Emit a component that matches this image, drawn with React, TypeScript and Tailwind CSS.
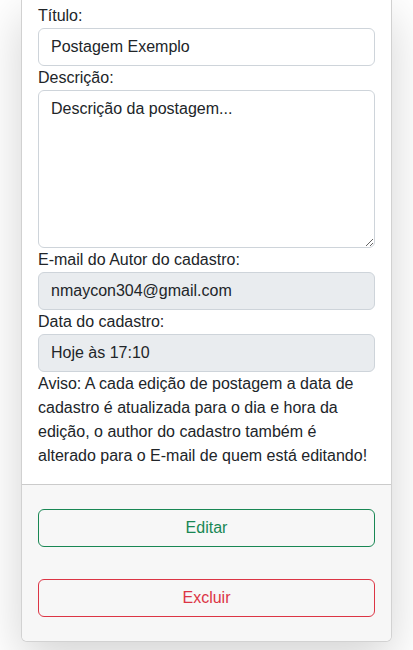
import { useState } from "react";

const inputBase =
  "block w-full rounded-[6px] border border-[#ced4da] px-3 py-[6px] text-base leading-6 text-[#212529] outline-none";

export default function App() {
  const [titulo, setTitulo] = useState("Postagem Exemplo");
  const [descricao, setDescricao] = useState("Descrição da postagem...");

  return (
    <div className="min-h-[650px] w-full bg-white font-['Liberation_Sans',Arial,sans-serif] text-base leading-6 text-[#212529]">
      <div className="ml-[21px] w-[371px] overflow-hidden rounded-b-[6px] border border-t-0 border-[rgba(0,0,0,0.175)] bg-white shadow-[0_1rem_3rem_rgba(0,0,0,0.175)]">
        <div className="px-4 pt-1 pb-4">
          <label className="block">Título:</label>
          <input
            className={inputBase + " bg-white"}
            value={titulo}
            onChange={(e) => setTitulo(e.target.value)}
          />
          <label className="block">Descrição:</label>
          <textarea
            className={inputBase + " h-[158px] bg-white"}
            value={descricao}
            onChange={(e) => setDescricao(e.target.value)}
          />
          <label className="block">E-mail do Autor do cadastro:</label>
          <input
            className={inputBase + " bg-[#e9ecef]"}
            value="nmaycon304@gmail.com"
            disabled
          />
          <label className="block">Data do cadastro:</label>
          <input className={inputBase + " bg-[#e9ecef]"} value="Hoje às 17:10" disabled />
          <p>
            Aviso: A cada edição de postagem a data de cadastro é atualizada para o dia e hora da
            edição, o author do cadastro também é alterado para o E-mail de quem está editando!
          </p>
        </div>
        <div className="flex flex-col gap-8 border-t border-[rgba(0,0,0,0.175)] bg-[#f7f7f7] px-4 py-6">
          <button className="block w-full rounded-[6px] border border-[#198754] px-3 py-[6px] text-base leading-6 text-[#198754]">
            Editar
          </button>
          <button className="block w-full rounded-[6px] border border-[#dc3545] px-3 py-[6px] text-base leading-6 text-[#dc3545]">
            Excluir
          </button>
        </div>
      </div>
    </div>
  );
}
